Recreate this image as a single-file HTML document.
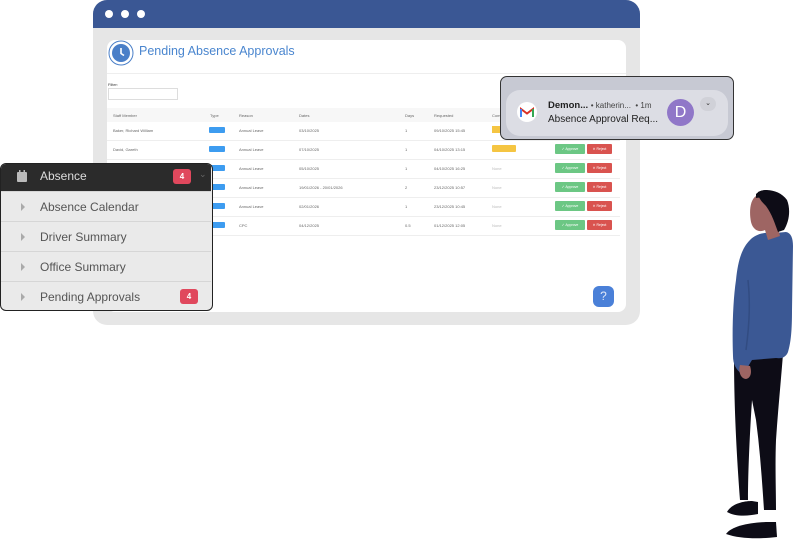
<!DOCTYPE html>
<html><head><meta charset="utf-8"><style>
*{margin:0;padding:0;box-sizing:border-box}
body{width:800px;height:539px;background:#fff;position:relative;overflow:hidden;font-family:"Liberation Sans",sans-serif}
.abs{position:absolute}
.frame{left:93px;top:0;width:547px;height:325px;background:#e6e6e6;border-radius:14px;overflow:hidden}
.bar{left:0;top:0;width:547px;height:28px;background:#3a5794}
.dot{width:8px;height:8px;border-radius:50%;background:#fff;top:10px}
.panel{left:14px;top:40px;width:519px;height:272px;background:#fff;border-radius:8px}
.t{font-size:4px;color:#666;position:absolute}
.badge{position:absolute;width:16px;height:6px;background:#3d9cf0;border-radius:1px}
.ap{position:absolute;width:30px;height:10px;background:#6cc784;border-radius:1px;color:#fff;font-size:3.5px;text-align:center;line-height:10px}
.rj{position:absolute;width:25px;height:10px;background:#d9534f;border-radius:1px;color:#fff;font-size:3.5px;text-align:center;line-height:10px}
.line{position:absolute;left:0;width:513px;height:1px;background:#eee}
.menu{left:0;top:163px;width:213px;height:148px;background:#eaeaea;border:1.5px solid #222;border-radius:6px;overflow:hidden}
.mh{left:0;top:0;width:210px;height:27px;background:#2b2b2b}
.mi{position:absolute;left:0;width:210px;height:30px;border-top:1px solid #d6d6d6;font-size:12px;color:#555;line-height:30px}
.mi span{position:absolute;left:39px}
.tri{position:absolute;left:20px;top:11px;width:0;height:0;border-left:4px solid #aaa;border-top:4px solid transparent;border-bottom:4px solid transparent}
.rb{position:absolute;width:18px;height:15px;background:#e0485d;border-radius:3px;color:#fff;font-size:8px;font-weight:bold;text-align:center;line-height:15px}
</style></head><body>
<div class="abs frame">
 <div class="abs bar"></div>
 <div class="abs dot" style="left:12px"></div><div class="abs dot" style="left:28px"></div><div class="abs dot" style="left:44px"></div>
 <div class="abs panel">
  <svg class="abs" style="left:1px;top:0" width="26" height="26" viewBox="0 0 26 26"><circle cx="13" cy="13" r="12" fill="#fff" stroke="#4a7fc8" stroke-width="1"/><circle cx="13" cy="13" r="9" fill="#4a7fc8"/><path d="M13 8v5.5l3 2" stroke="#fff" stroke-width="1.6" fill="none"/></svg>
  <div class="abs" style="left:32px;top:4px;font-size:12.5px;color:#4a86cf">Pending Absence Approvals</div>
  <div class="abs" style="left:0;top:33px;width:519px;height:1px;background:#eee"></div>
  <div class="t" style="left:1px;top:42px;color:#333">Filter:</div>
  <div class="abs" style="left:1px;top:48px;width:70px;height:12px;border:1px solid #ddd"></div>
  <div class="abs" style="left:0;top:68px;width:513px;height:14px;background:#f7f7f7"></div>
  <div class="t" style="left:6px;top:73px">Staff Member</div><div class="t" style="left:103px;top:73px">Type</div><div class="t" style="left:132px;top:73px">Reason</div><div class="t" style="left:192px;top:73px">Dates</div><div class="t" style="left:298px;top:73px">Days</div><div class="t" style="left:327px;top:73px">Requested</div><div class="t" style="left:385px;top:73px">Comments</div>
  <div class="line" style="top:100px"></div><div class="line" style="top:119px"></div><div class="line" style="top:138px"></div><div class="line" style="top:157px"></div><div class="line" style="top:176px"></div><div class="line" style="top:195px"></div>

  <div class="t" style="left:6px;top:88px">Baker, Richard William</div><div class="badge" style="left:102px;top:87px"></div><div class="t" style="left:132px;top:88px">Annual Leave</div><div class="t" style="left:192px;top:88px">03/10/2025</div><div class="t" style="left:298px;top:88px">1</div><div class="t" style="left:327px;top:88px">09/10/2025 15:45</div><div class="abs" style="left:385px;top:86px;width:8px;height:7px;background:#f5c542"></div>
  <div class="t" style="left:6px;top:107px">David, Gareth</div><div class="badge" style="left:102px;top:106px"></div><div class="t" style="left:132px;top:107px">Annual Leave</div><div class="t" style="left:192px;top:107px">07/10/2025</div><div class="t" style="left:298px;top:107px">1</div><div class="t" style="left:327px;top:107px">04/10/2025 13:15</div><div class="abs" style="left:385px;top:105px;width:24px;height:7px;background:#f5c542;border-radius:1px"></div><div class="ap" style="left:448px;top:104px">✓ Approve</div><div class="rj" style="left:480px;top:104px">✕ Reject</div>
  <div class="t" style="left:132px;top:126px">Annual Leave</div><div class="badge" style="left:102px;top:125px"></div><div class="t" style="left:192px;top:126px">05/10/2025</div><div class="t" style="left:298px;top:126px">1</div><div class="t" style="left:327px;top:126px">04/10/2025 16:25</div><div class="t" style="left:385px;top:126px;color:#bbb">None</div><div class="ap" style="left:448px;top:123px">✓ Approve</div><div class="rj" style="left:480px;top:123px">✕ Reject</div>
  <div class="t" style="left:132px;top:145px">Annual Leave</div><div class="badge" style="left:102px;top:144px"></div><div class="t" style="left:192px;top:145px">19/01/2026 - 20/01/2026</div><div class="t" style="left:298px;top:145px">2</div><div class="t" style="left:327px;top:145px">23/12/2025 10:57</div><div class="t" style="left:385px;top:145px;color:#bbb">None</div><div class="ap" style="left:448px;top:142px">✓ Approve</div><div class="rj" style="left:480px;top:142px">✕ Reject</div>
  <div class="t" style="left:132px;top:164px">Annual Leave</div><div class="badge" style="left:102px;top:163px"></div><div class="t" style="left:192px;top:164px">02/01/2026</div><div class="t" style="left:298px;top:164px">1</div><div class="t" style="left:327px;top:164px">23/12/2025 10:45</div><div class="t" style="left:385px;top:164px;color:#bbb">None</div><div class="ap" style="left:448px;top:161px">✓ Approve</div><div class="rj" style="left:480px;top:161px">✕ Reject</div>
  <div class="t" style="left:132px;top:183px">CPC</div><div class="badge" style="left:102px;top:182px"></div><div class="t" style="left:192px;top:183px">04/12/2025</div><div class="t" style="left:298px;top:183px">0.5</div><div class="t" style="left:327px;top:183px">01/12/2025 12:05</div><div class="t" style="left:385px;top:183px;color:#bbb">None</div><div class="ap" style="left:448px;top:180px">✓ Approve</div><div class="rj" style="left:480px;top:180px">✕ Reject</div>
  <div class="abs" style="left:486px;top:246px;width:21px;height:21px;background:#4a80d8;border-radius:6px;color:#dfe8f8;font-size:12px;text-align:center;line-height:21px">?</div>
 </div>
</div>

<div class="abs" style="left:500px;top:76px;width:234px;height:64px;background:#c7c9d3;border:1.5px solid #333;border-radius:7px;overflow:hidden">
 <div class="abs" style="left:5px;top:13px;width:222px;height:46px;background:#dcdde4;border-radius:14px"></div>
 <div class="abs" style="left:16px;top:25px;width:20px;height:20px;border-radius:50%;background:#fff"></div>
 <svg class="abs" style="left:19px;top:30px" width="14" height="11" viewBox="0 0 14 11"><path d="M1 10V2l6 4.5L13 2v8" fill="none" stroke="#d93025" stroke-width="2"/><path d="M1 10V2" stroke="#4285f4" stroke-width="2"/><path d="M13 10V2" stroke="#34a853" stroke-width="2"/></svg>
 <div class="abs" style="left:47px;top:23px;font-size:9.5px;color:#222;white-space:nowrap"><b>Demon...</b> <span style="font-size:8px;color:#444">• katherin... &nbsp;• 1m</span></div>
 <div class="abs" style="left:47px;top:37px;font-size:10px;color:#222;white-space:nowrap">Absence Approval Req...</div>
 <div class="abs" style="left:166px;top:22px;width:27px;height:27px;border-radius:50%;background:#9077c8;color:#fff;font-size:16px;text-align:center;line-height:27px">D</div>
 <div class="abs" style="left:199px;top:20px;width:16px;height:14px;border-radius:7px;background:#d0d1d8;font-size:7px;text-align:center;line-height:13px;color:#333">⌄</div>
</div>

<div class="abs menu">
 <div class="abs mh"></div>
 <svg class="abs" style="left:16px;top:6px" width="10" height="12" viewBox="0 0 10 12"><rect x="0" y="2" width="10" height="10" rx="1" fill="#bbb"/><rect x="2" y="0" width="1.5" height="3" fill="#bbb"/><rect x="6.5" y="0" width="1.5" height="3" fill="#bbb"/></svg>
 <div class="abs" style="left:39px;top:5px;font-size:12px;color:#ddd">Absence</div>
 <div class="rb" style="left:172px;top:5px">4</div>
 <div class="abs" style="left:198px;top:5px;font-size:9px;color:#666">⌄</div>
 <div class="mi" style="top:27px"><div class="tri"></div><span>Absence Calendar</span></div>
 <div class="mi" style="top:57px"><div class="tri"></div><span>Driver Summary</span></div>
 <div class="mi" style="top:87px"><div class="tri"></div><span>Office Summary</span></div>
 <div class="mi" style="top:117px"><div class="tri"></div><span>Pending Approvals</span><div class="rb" style="left:179px;top:7px">4</div></div>
</div>

<svg class="abs" style="left:690px;top:180px" width="110" height="359" viewBox="0 0 110 359">
 <!-- legs -->
 <path d="M44 176 L93 174 C91 200 88 230 86 260 C85 285 86 310 86 330 L74 330 C72 300 70 270 66 240 L62 220 C60 250 58 290 58 320 L50 320 C47 280 44 230 44 176Z" fill="#0d0c16"/>
 <!-- shoes -->
 <path d="M37 332 C42 323 55 321 62 321 L68 322 L68 334 C58 336 46 337 37 332Z" fill="#0d0c16"/>
 <path d="M36 354 C42 346 58 343 76 342 L86 342 L87 357 C70 359 50 359 36 354Z" fill="#0d0c16"/>
 <!-- hoodie -->
 <path d="M60 60 C66 54 74 52 84 53 L96 52 C101 53 103 58 103 66 L102 130 C102 150 101 162 98 172 C96 177 92 179 86 178 L62 180 C58 186 56 192 52 194 C46 190 43 184 43 176 C42 150 43 120 46 100 C48 80 52 68 60 60Z" fill="#3b5894"/>
 <path d="M58 100 C60 120 60 140 56 170" stroke="#324c82" stroke-width="1.5" fill="none"/>
 <!-- hand -->
 <path d="M50 185 C48 192 51 199 56 199 C61 198 62 192 60 186Z" fill="#9e6563"/>
 <!-- face -->
 <path d="M66 16 C60 20 59 32 61 42 C63 50 69 53 75 50 L78 60 L90 56 L86 40 C84 28 76 18 66 16Z" fill="#9e6563"/>
 <!-- hair -->
 <path d="M68 12 C76 8 90 10 97 20 C101 30 99 42 94 50 L88 52 C85 44 82 34 76 26 C72 22 68 18 68 12Z" fill="#0d0c16"/>
 <path d="M66 14 C70 10 76 9 80 11 L78 20 C74 18 70 17 66 18Z" fill="#0d0c16"/>
</svg>
</body></html>
